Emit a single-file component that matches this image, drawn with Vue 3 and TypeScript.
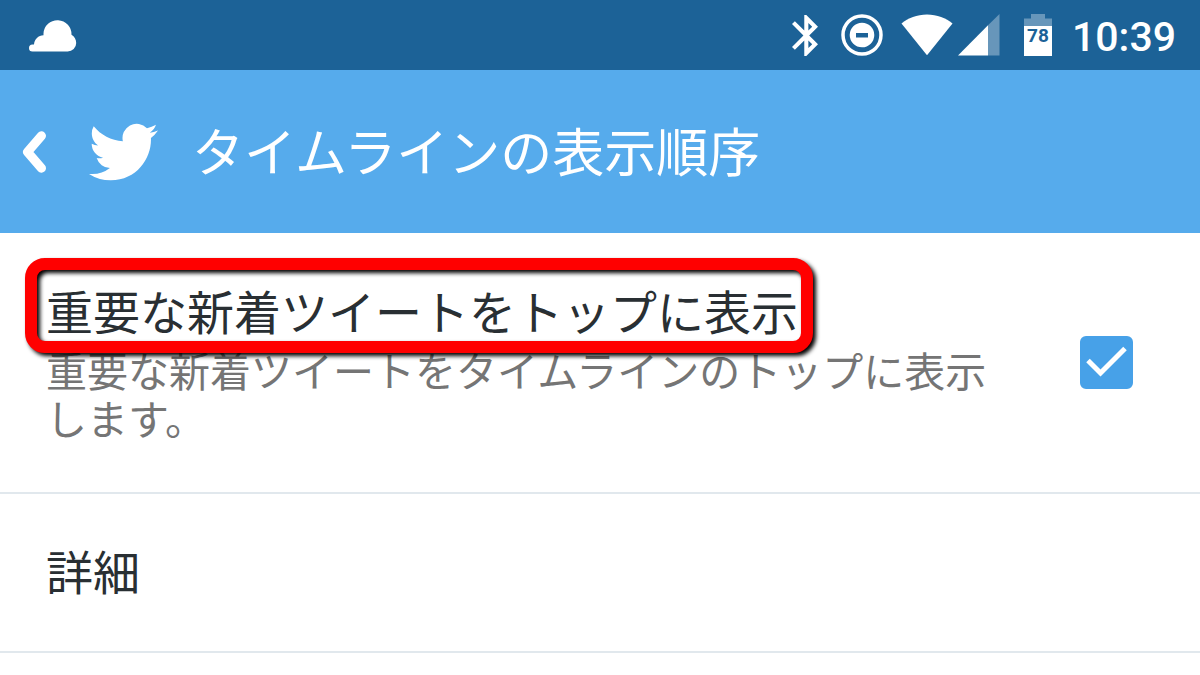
<script setup lang="ts">
import { ref } from 'vue'

const time = ref<string>('10:39')
const battery = ref<number>(78)
const showTopTweets = ref<boolean>(true)
</script>

<template>
  <div class="screen">
    <div class="status-bar">
      <svg class="cloud" width="48" height="33" viewBox="0 0 48 33" aria-hidden="true">
        <path d="M3.5 32.5a3.5 3.5 0 0 1 0-7H5C5.500 20 9.300 16.500 14.500 16.200V14.500a14 14 0 0 1 28 1.300C45.500 17.500 47.200 20.500 47.200 24a8.500 8.500 0 0 1-8.500 8.500z" />
      </svg>
      <div class="indicators">
        <svg width="26" height="41" viewBox="5 2 12.71 20" aria-hidden="true">
          <path d="M17.71 7.71L12 2h-1v7.59L6.41 5 5 6.41 10.59 12 5 17.59 6.41 19 11 14.41V22h1l5.71-5.71-4.3-4.29 4.3-4.29zM13 5.83l1.88 1.88L13 9.59V5.83zm1.88 10.46L13 18.17v-3.76l1.88 1.88z" />
        </svg>
        <svg class="dnd" width="42" height="42" viewBox="0 0 42 42" aria-hidden="true">
          <circle class="ring" cx="21" cy="21" r="19" />
          <path fill-rule="evenodd" d="M21 8.700a12.300 12.300 0 1 0 0 24.600a12.300 12.300 0 1 0 0-24.600zM15 19h12v4.500H15z" />
        </svg>
        <svg class="wifi" width="52" height="42" viewBox="0 0 52 42" aria-hidden="true">
          <path d="M0.500 9.500C7 4 16 0.500 26 0.500S45 4 51.500 9.500L26 41.300z" />
        </svg>
        <svg class="signal" width="42" height="42" viewBox="0 0 42 42" aria-hidden="true">
          <path class="dim" d="M30 11.300L41.500 0V41.500H30z" />
          <path d="M0 41.500L30 11.300V41.500z" />
        </svg>
        <svg class="battery" width="28" height="42" viewBox="0 0 28 42" role="img" aria-label="バッテリー">
          <path class="dim" d="M7 0H21V4.500H28V12H0V4.500H7z" />
          <path d="M0 12H28V42H0z" />
          <text x="14" y="28" text-anchor="middle">{{ battery }}</text>
        </svg>
        <time class="clock">{{ time }}</time>
      </div>
    </div>

    <header class="app-bar">
      <button class="back" type="button" aria-label="戻る">
        <svg width="26" height="42" viewBox="0 0 26 42" aria-hidden="true">
          <path d="M19.500 4.800L5.500 21L19.500 37.200" />
        </svg>
      </button>
      <svg class="bird" width="69" height="58" viewBox="0 2 24 20" preserveAspectRatio="none" aria-hidden="true">
        <path d="M23.953 4.57a10 10 0 01-2.825.775 4.958 4.958 0 002.163-2.723c-.951.555-2.005.959-3.127 1.184a4.92 4.92 0 00-8.384 4.482C7.69 8.095 4.067 6.13 1.64 3.162a4.822 4.822 0 00-.666 2.475c0 1.71.87 3.213 2.188 4.096a4.904 4.904 0 01-2.228-.616v.06a4.923 4.923 0 003.946 4.827 4.996 4.996 0 01-2.212.085 4.936 4.936 0 004.604 3.417 9.867 9.867 0 01-6.102 2.105c-.39 0-.779-.023-1.17-.067a13.995 13.995 0 007.557 2.209c9.053 0 13.998-7.496 13.998-13.985 0-.21 0-.42-.015-.63A9.935 9.935 0 0024 4.59z" />
      </svg>
      <h1>タイムラインの表示順序</h1>
    </header>

    <main>
      <label class="row setting" for="top-tweets">
        <span class="copy">
          <span class="title highlighted">重要な新着ツイートをトップに表示</span>
          <span class="description">重要な新着ツイートをタイムラインのトップに表示します。</span>
        </span>
        <span class="check">
          <input id="top-tweets" v-model="showTopTweets" type="checkbox" />
          <svg v-if="showTopTweets" width="53" height="53" viewBox="0 0 53 53" aria-hidden="true">
            <path d="M8 24.500L20.500 37L45 12.500" />
          </svg>
        </span>
      </label>
      <a class="row link" href="#details"><span class="title">詳細</span></a>
    </main>
  </div>
</template>

<style>
body {
  margin: 0;
  background: #ffffff;
}
</style>

<style scoped>
.screen {
  min-height: 100vh;
  background: #ffffff;
  color: #292f33;
  font-family: 'Noto Sans CJK JP', 'Noto Sans', sans-serif;
  overflow: hidden;
}

svg {
  display: block;
  flex: none;
}

.status-bar {
  display: flex;
  align-items: center;
  justify-content: space-between;
  height: 70px;
  padding: 0 24px 0 29px;
  background: #1c6297;
  color: #ffffff;
}

.status-bar svg {
  fill: #ffffff;
}

.indicators {
  display: flex;
  align-items: center;
}

.indicators .dnd {
  margin-left: 23px;
}

.dnd .ring {
  fill: none;
  stroke: #ffffff;
  stroke-width: 3.5;
}

.indicators .wifi {
  margin-left: 18px;
}

.indicators .signal {
  margin-left: 5px;
}

.indicators .battery {
  margin-left: 24px;
}

.indicators .dim {
  fill: #6796ba;
}

.battery text {
  fill: #1c6297;
  font-family: Roboto, sans-serif;
  font-size: 19px;
  font-weight: 700;
}

.clock {
  margin-left: 20px;
  padding-top: 4px;
  font-family: Roboto, sans-serif;
  font-size: 41px;
  font-weight: 500;
  line-height: 48px;
}

.app-bar {
  display: flex;
  align-items: center;
  height: 163px;
  padding: 0 22px;
  background: #56abec;
  color: #ffffff;
}

.back {
  margin: 0;
  padding: 0;
  border: 0;
  background: none;
  cursor: pointer;
}

.back path {
  fill: none;
  stroke: #ffffff;
  stroke-width: 9;
  stroke-linecap: round;
  stroke-linejoin: round;
}

.bird {
  margin-left: 41px;
  fill: #ffffff;
}

h1 {
  margin: 0;
  padding: 0 0 4px 34px;
  font-size: 52px;
  font-weight: 400;
  line-height: 76px;
}

.row {
  display: flex;
  align-items: center;
  padding: 42px 67px 51px 46px;
  border-bottom: 2px solid #e1e8ed;
}

.setting {
  gap: 64px;
  cursor: pointer;
}

.copy {
  flex: 1;
  min-width: 0;
}

.title {
  display: block;
  width: fit-content;
  font-size: 47px;
  line-height: 70px;
}

.highlighted {
  position: relative;
}

.highlighted::after {
  content: '';
  position: absolute;
  inset: -17px -15px -8px -21px;
  border: 12px solid #ff0000;
  border-radius: 20px;
  filter: drop-shadow(3px 3px 2px #000000);
}

.description {
  display: block;
  color: #757575;
  font-size: 41px;
  line-height: 48px;
}

.check {
  display: grid;
  flex: none;
  padding-top: 9px;
}

.check > * {
  grid-area: 1 / 1;
}

.check input {
  appearance: none;
  width: 53px;
  height: 53px;
  margin: 0;
  border: 4px solid #757575;
  border-radius: 6px;
}

.check input:checked {
  border-color: #47a1e8;
  background: #47a1e8;
}

.check svg {
  pointer-events: none;
}

.check path {
  fill: none;
  stroke: #ffffff;
  stroke-width: 5;
}

.link {
  color: inherit;
  text-decoration: none;
  padding-top: 41px;
  padding-bottom: 46px;
}
</style>
